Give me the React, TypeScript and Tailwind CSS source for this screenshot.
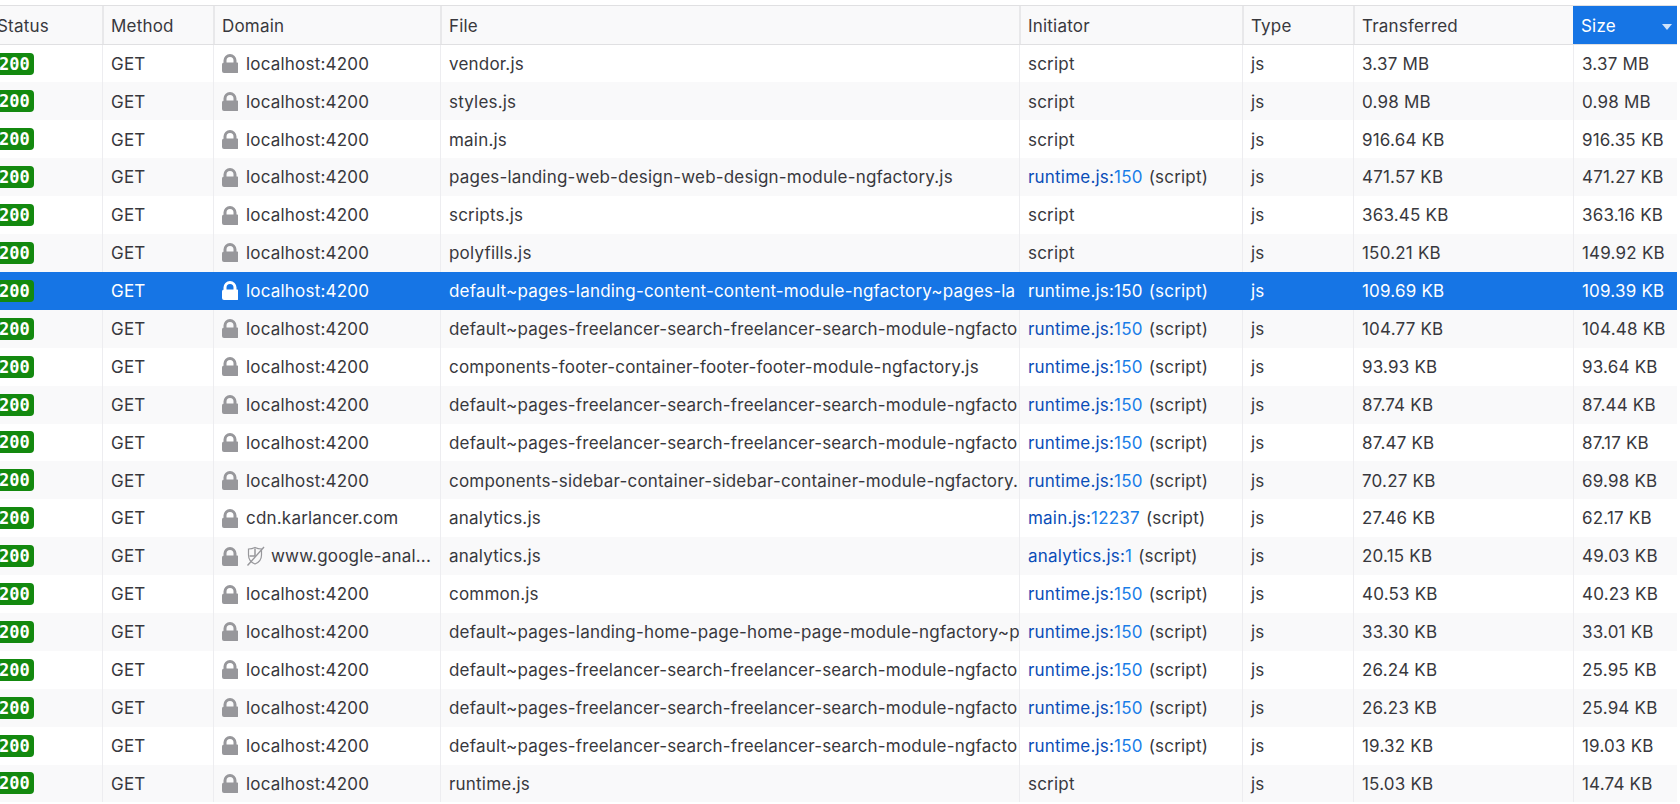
const ROW_H = 'h-[37.9px]'

type Row = {
  domain?: string
  file: string
  initiator?: [string, string]
  transferred: string
  size: string
  tracker?: boolean
  selected?: boolean
}

const RUNTIME: [string, string] = ['runtime.js:', '150']
const SEARCH = 'default~pages-freelancer-search-freelancer-search-module-ngfacto'

const rows: Row[] = [
  { file: 'vendor.js', transferred: '3.37 MB', size: '3.37 MB' },
  { file: 'styles.js', transferred: '0.98 MB', size: '0.98 MB' },
  { file: 'main.js', transferred: '916.64 KB', size: '916.35 KB' },
  { file: 'pages-landing-web-design-web-design-module-ngfactory.js', initiator: RUNTIME, transferred: '471.57 KB', size: '471.27 KB' },
  { file: 'scripts.js', transferred: '363.45 KB', size: '363.16 KB' },
  { file: 'polyfills.js', transferred: '150.21 KB', size: '149.92 KB' },
  { file: 'default~pages-landing-content-content-module-ngfactory~pages-la', initiator: RUNTIME, transferred: '109.69 KB', size: '109.39 KB', selected: true },
  { file: SEARCH, initiator: RUNTIME, transferred: '104.77 KB', size: '104.48 KB' },
  { file: 'components-footer-container-footer-footer-module-ngfactory.js', initiator: RUNTIME, transferred: '93.93 KB', size: '93.64 KB' },
  { file: SEARCH, initiator: RUNTIME, transferred: '87.74 KB', size: '87.44 KB' },
  { file: SEARCH, initiator: RUNTIME, transferred: '87.47 KB', size: '87.17 KB' },
  { file: 'components-sidebar-container-sidebar-container-module-ngfactory.', initiator: RUNTIME, transferred: '70.27 KB', size: '69.98 KB' },
  { domain: 'cdn.karlancer.com', file: 'analytics.js', initiator: ['main.js:', '12237'], transferred: '27.46 KB', size: '62.17 KB' },
  { domain: 'www.google-anal...', tracker: true, file: 'analytics.js', initiator: ['analytics.js:', '1'], transferred: '20.15 KB', size: '49.03 KB' },
  { file: 'common.js', initiator: RUNTIME, transferred: '40.53 KB', size: '40.23 KB' },
  { file: 'default~pages-landing-home-page-home-page-module-ngfactory~p', initiator: RUNTIME, transferred: '33.30 KB', size: '33.01 KB' },
  { file: SEARCH, initiator: RUNTIME, transferred: '26.24 KB', size: '25.95 KB' },
  { file: SEARCH, initiator: RUNTIME, transferred: '26.23 KB', size: '25.94 KB' },
  { file: SEARCH, initiator: RUNTIME, transferred: '19.32 KB', size: '19.03 KB' },
  { file: 'runtime.js', transferred: '15.03 KB', size: '14.74 KB' },
]

function Lock({ color }: { color: string }) {
  return (
    <svg width="16" height="19" viewBox="0 0 16 19" className="-mt-[2px] shrink-0" fill={color} fillRule="evenodd">
      <path d="M2 8.500h-.5V6.500a6.500 6.500 0 0 1 13 0v2h.5a2 2 0 0 1 2 2V17a2 2 0 0 1-2 2H2a2 2 0 0 1-2-2v-6.500a2 2 0 0 1 2-2zM4.500 8.500h7v-2a3.500 3.500 0 0 0-7 0z" />
    </svg>
  )
}

function TrackerShield() {
  return (
    <svg width="19" height="20" viewBox="0 0 19 20" className="-mt-[2px] ml-2 shrink-0" fill="none" stroke="#97979b" strokeWidth="1.200">
      <path d="M2.500 3c2.500 0 4.700-.6 6.500-1.500 1.800.9 4 1.500 6.500 1.500v6c0 4.200-2.700 7.500-6.500 9-3.800-1.500-6.500-4.800-6.500-9z" />
      <path d="M9 2.500V10H3.500" strokeWidth="1.500" />
      <path d="M18 1 1.500 19.500" strokeWidth="1.400" />
    </svg>
  )
}

const cell = 'flex items-center overflow-hidden whitespace-nowrap pl-2 pt-[2px]'
const grid = 'grid grid-cols-[103px_111px_227px_579px_223px_111px_220px_104px] w-[1678px] -ml-[1px]'

export default function App() {
  return (
    <div className="h-[804px] w-[1680px] overflow-hidden bg-white pt-[4.6px] text-[17px] tracking-[0.2px] text-[#38383d] font-['Inter','Noto_Sans',sans-serif]">
      <div className={`${grid} h-[40px] border-y border-[#e0e0e2] bg-[#f9f9fa]`}>
        {['Status', 'Method', 'Domain', 'File', 'Initiator', 'Type', 'Transferred'].map((h, i) => (
          <div key={h} className={`flex items-center pt-[4px] ${i === 0 ? '-ml-[10px] pl-2' : 'border-l-2 border-[#e8e8ea] pl-[7px]'}`}>{h}</div>
        ))}
        <div className="flex items-center justify-between bg-[#1675e5] pl-2 pr-[5px] pt-[4px] text-white">
          <span>Size</span>
          <span className="h-0 w-0 border-x-[5px] border-t-[6px] border-x-transparent border-t-[#cfe3fa]" />
        </div>
      </div>
      {rows.map((r, i) => {
        const sel = r.selected
        const bg = sel ? 'bg-[#1675e5] text-white' : i % 2 ? 'bg-[#f9f9fa]' : 'bg-white'
        const line = sel ? 'border-l border-transparent' : 'border-l border-[#ededf0]'
        return (
          <div key={i} className={`${grid} ${ROW_H} ${bg}`}>
            <div className="flex items-center overflow-hidden">
              <span className="-ml-[7px] rounded-[4px] bg-[#13890f] pl-[7px] pr-[4px] font-['DejaVu_Sans_Mono',monospace] text-[17px] font-bold tracking-normal leading-[22px] text-white">200</span>
            </div>
            <div className={`${cell} ${line}`}>GET</div>
            <div className={`${cell} ${line}`}>
              <Lock color={sel ? '#ffffff' : '#97979b'} />
              {r.tracker && <TrackerShield />}
              <span className={r.tracker ? 'ml-[6px]' : 'ml-2'}>{r.domain ?? 'localhost:4200'}</span>
            </div>
            <div className={`${cell} ${line}`}>{r.file}</div>
            <div className={`${cell} ${line}`}>
              {r.initiator ? (
                <>
                  <span className={sel ? '' : 'text-[#0a4db8]'}>{r.initiator[0]}</span>
                  <span className={sel ? '' : 'text-[#1a7ee8]'}>{r.initiator[1]}</span>
                  <span className="ml-[6px]">(script)</span>
                </>
              ) : 'script'}
            </div>
            <div className={`${cell} ${line}`}>js</div>
            <div className={`${cell} ${line}`}>{r.transferred}</div>
            <div className={`${cell} ${line}`}>{r.size}</div>
          </div>
        )
      })}
    </div>
  )
}
